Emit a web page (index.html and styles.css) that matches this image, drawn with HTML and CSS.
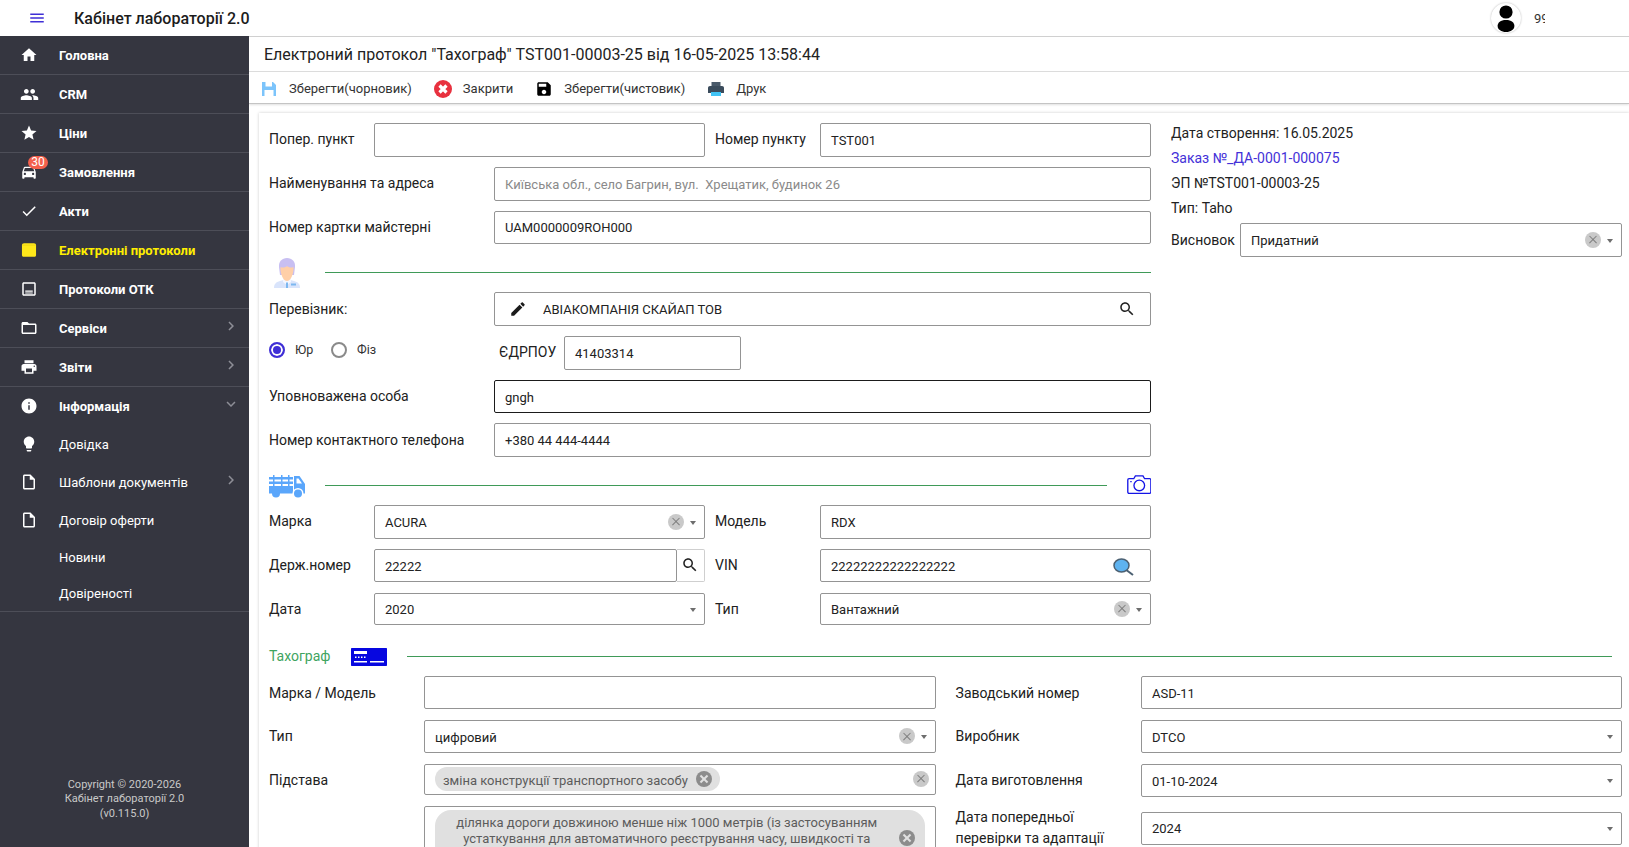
FILE: index.html
```html
<!DOCTYPE html>
<html lang="uk">
<head>
<meta charset="utf-8">
<title>Кабінет лабораторії 2.0</title>
<link rel="stylesheet" href="styles.css">
</head>
<body>
<header class="topbar">
  <svg class="burger" viewBox="0 0 24 24"><path d="M3 18h18v-2H3v2zm0-5h18v-2H3v2zm0-7v2h18V6H3z"/></svg>
  <div class="brand">Кабінет лабораторії 2.0</div>
  <div class="user">
    <div class="avatar"><svg viewBox="0 0 30 30"><circle cx="15" cy="9" r="6.6"/><path d="M15 17c-5.5 0-8.4 2.6-8.4 6 0 3.600 3.800 6 8.400 6s8.400-2.400 8.400-6c0-3.400-2.900-6-8.400-6z"/></svg></div>
    <div class="user-name">99999</div>
  </div>
</header>
<div class="shell">
  <nav class="side">
    <a class="nav main"><svg viewBox="0 0 24 24"><path d="M10 20v-6h4v6h5v-8h3L12 3 2 12h3v8z"/></svg><span>Головна</span></a>
    <a class="nav main"><svg class="wide" viewBox="0 0 24 24"><path d="M16 11c1.660 0 2.990-1.340 2.990-3S17.660 5 16 5c-1.660 0-3 1.340-3 3s1.340 3 3 3zm-8 0c1.660 0 2.990-1.340 2.990-3S9.660 5 8 5C6.340 5 5 6.340 5 8s1.340 3 3 3zm0 2c-2.330 0-7 1.170-7 3.500V19h14v-2.500c0-2.330-4.670-3.500-7-3.500zm8 0c-.29 0-.62.02-.97.05 1.160.84 1.970 1.970 1.970 3.450V19h6v-2.500c0-2.330-4.670-3.500-7-3.500z"/></svg><span>CRM</span></a>
    <a class="nav main"><svg viewBox="0 0 24 24"><path d="M12 17.270L18.180 21l-1.640-7.030L22 9.240l-7.190-.61L12 2 9.190 8.630 2 9.240l5.460 4.730L5.820 21z"/></svg><span>Ціни</span></a>
    <a class="nav main"><svg viewBox="0 0 24 24"><path d="M18.920 6.010C18.720 5.420 18.160 5 17.500 5h-11c-.66 0-1.210.42-1.420 1.010L3 12v8c0 .55.45 1 1 1h1c.55 0 1-.45 1-1v-1h12v1c0 .55.45 1 1 1h1c.55 0 1-.45 1-1v-8l-2.080-5.990zM6.500 16c-.83 0-1.500-.67-1.500-1.500S5.670 13 6.500 13s1.500.67 1.500 1.500S7.330 16 6.500 16zm11 0c-.83 0-1.500-.67-1.500-1.500s.67-1.500 1.500-1.500 1.500.67 1.500 1.500-.67 1.500-1.500 1.500zM5 11l1.500-4.500h11L19 11H5z"/></svg><span>Замовлення</span><b class="badge">30</b></a>
    <a class="nav main"><svg viewBox="0 0 24 24"><path d="M9 16.170L4.830 12l-1.420 1.410L9 19 21 7l-1.410-1.410z"/></svg><span>Акти</span></a>
    <a class="nav main active"><svg viewBox="0 0 24 24"><path d="M5.500 3h13c1.900 0 2.900 1 2.900 2.900V18.500c0 1.600-1 2.500-2.900 2.500h-13c-1.900 0-2.900-.9-2.900-2.500V5.900C2.600 4 3.600 3 5.500 3z"/><path class="cut" d="M3 5.500h18"/></svg><span>Електронні протоколи</span></a>
    <a class="nav main"><svg viewBox="0 0 24 24"><path d="M19 3H5c-1.100 0-2 .9-2 2v14c0 1.100.9 2 2 2h14c1.100 0 2-.9 2-2V5c0-1.100-.9-2-2-2zm0 16H5V5h14v14zM7 14h10v1.500H7zm0 2.500h10V18H7z"/></svg><span>Протоколи ОТК</span></a>
    <a class="nav main"><svg viewBox="0 0 24 24"><path d="M20 6h-8l-2-2H4c-1.100 0-1.990.9-1.990 2L2 18c0 1.100.9 2 2 2h16c1.100 0 2-.9 2-2V8c0-1.100-.9-2-2-2zm0 12H4V8h16v10z"/></svg><span>Сервіси</span><svg class="chev" viewBox="0 0 24 24"><path d="M10 6L8.590 7.410 13.170 12l-4.580 4.590L10 18l6-6z"/></svg></a>
    <a class="nav main"><svg viewBox="0 0 24 24"><path d="M19 8H5c-1.660 0-3 1.340-3 3v6h4v4h12v-4h4v-6c0-1.660-1.340-3-3-3zm-3 11H8v-5h8v5zm3-7c-.55 0-1-.45-1-1s.45-1 1-1 1 .45 1 1-.45 1-1 1zm-1-9H6v4h12V3z"/></svg><span>Звіти</span><svg class="chev" viewBox="0 0 24 24"><path d="M10 6L8.590 7.410 13.170 12l-4.580 4.590L10 18l6-6z"/></svg></a>
    <a class="nav main open"><svg viewBox="0 0 24 24"><path d="M12 2C6.480 2 2 6.480 2 12s4.480 10 10 10 10-4.480 10-10S17.520 2 12 2zm1 15h-2v-6h2v6zm0-8h-2V7h2v2z"/></svg><span>Інформація</span><svg class="chev" viewBox="0 0 24 24"><path d="M16.590 8.590L12 13.170 7.410 8.590 6 10l6 6 6-6z"/></svg></a>
    <a class="nav sub"><svg viewBox="0 0 24 24"><path d="M9 21c0 .55.45 1 1 1h4c.55 0 1-.45 1-1v-1H9v1zm3-19C8.140 2 5 5.140 5 9c0 2.380 1.190 4.470 3 5.740V17c0 .55.45 1 1 1h6c.55 0 1-.45 1-1v-2.260c1.810-1.270 3-3.360 3-5.740 0-3.860-3.140-7-7-7z"/></svg><span>Довідка</span></a>
    <a class="nav sub"><svg viewBox="0 0 24 24"><path d="M14 2H6c-1.100 0-1.990.9-1.990 2L4 20c0 1.100.89 2 1.990 2H18c1.100 0 2-.9 2-2V8l-6-6zM6 20V4h7v5h5v11H6z"/></svg><span>Шаблони документів</span><svg class="chev" viewBox="0 0 24 24"><path d="M10 6L8.590 7.410 13.170 12l-4.580 4.590L10 18l6-6z"/></svg></a>
    <a class="nav sub"><svg viewBox="0 0 24 24"><path d="M14 2H6c-1.100 0-1.990.9-1.990 2L4 20c0 1.100.89 2 1.990 2H18c1.100 0 2-.9 2-2V8l-6-6zM6 20V4h7v5h5v11H6z"/></svg><span>Договір оферти</span></a>
    <a class="nav plain"><span>Новини</span></a>
    <a class="nav plain last"><span>Довіреності</span></a>
    <div class="copy">Copyright © 2020-2026<br>Кабінет лабораторії 2.0<br>(v0.115.0)</div>
  </nav>

  <main class="content">
    <h1 class="doc-title">Електроний протокол "Тахограф" TST001-00003-25 від 16-05-2025 13:58:44</h1>
    <div class="toolbar">
      <div class="tool"><svg viewBox="0 0 18 18"><path class="sv-l" d="M2 2h11l3 3v11H2z"/><path class="sv-w" d="M5.500 2h6.500v4.500H5.500zM4.500 10h9v6h-9z"/></svg><span>Зберегти(чорновик)</span></div>
      <div class="tool"><svg viewBox="0 0 18 18"><circle class="cl-r" cx="9" cy="9" r="9"/><path class="cl-x" d="M5.500 5.500l7 7m0-7l-7 7"/></svg><span>Закрити</span></div>
      <div class="tool"><svg viewBox="0 0 24 24"><path d="M17 3H5c-1.110 0-2 .9-2 2v14c0 1.100.89 2 2 2h14c1.100 0 2-.9 2-2V7l-4-4zm-5 16c-1.660 0-3-1.340-3-3s1.340-3 3-3 3 1.340 3 3-1.340 3-3 3zm3-10H5V5h10v4z"/></svg><span>Зберегти(чистовик)</span></div>
      <div class="tool"><svg viewBox="0 0 18 18"><path class="pr-t" d="M4.500 2h9v4h-9z"/><path class="pr-b" d="M3 6h12c1.200 0 2 .8 2 2v5H1V8c0-1.200.8-2 2-2z"/><path class="pr-p" d="M4 12h10v4H4z"/></svg><span>Друк</span></div>
    </div>

    <div class="card">
      <div class="top-area">
        <section class="left">
          <div class="row r-two">
            <label>Попер. пункт</label><div class="f"></div>
            <label class="second">Номер пункту</label><div class="f">TST001</div>
          </div>
          <div class="row r-long">
            <label>Найменування та адреса</label><div class="f muted">Київська обл., село Багрин, вул.&nbsp; Хрещатик, будинок 26</div>
          </div>
          <div class="row r-long h-s">
            <label>Номер картки майстерні</label><div class="f">UAM0000009ROH000</div>
          </div>

          <div class="sec sec-first">
            <svg class="ic-person" viewBox="0 0 28 30"><path class="p-sh" d="M1 30c0-4 2-6 6-7l7-2 7 2c4 1 6 3 6 7z"/><path class="p-n" d="M10 20h8v4l-4 3-4-3z"/><path class="p-h" d="M14 0c-5 0-8.500 3.500-8 9l1 8h14l1-8c.5-5.500-3-9-8-9z"/><path class="p-f" d="M7.500 9c2.500 1 5 .5 6.500-1 1.500 1.500 4 2 6.500 1 .5 6-2.500 14-6.500 14s-7-8-6.500-14z"/><path class="p-t" d="M13 24.500h2v5.500h-2zM18 25.500h5v2h-5z"/></svg>
            <hr>
          </div>

          <div class="row r-long">
            <label class="nudge">Перевізник:</label>
            <div class="f carrier">
              <svg class="ic-edit" viewBox="0 0 24 24"><path d="M3 17.250V21h3.750L17.810 9.940l-3.750-3.750L3 17.250zM20.710 7.040c.39-.39.39-1.020 0-1.410l-2.340-2.340c-.39-.39-1.020-.39-1.410 0l-1.830 1.830 3.750 3.750 1.830-1.830z"/></svg>
              <span class="grow">АВІАКОМПАНІЯ СКАЙАП ТОВ</span>
              <svg class="ic-search" viewBox="0 0 24 24"><path d="M15.500 14h-.79l-.28-.27C15.410 12.590 16 11.110 16 9.500 16 5.910 13.090 3 9.500 3S3 5.910 3 9.500 5.910 16 9.500 16c1.610 0 3.090-.59 4.230-1.570l.27.28v.79l5 4.990L20.490 19l-4.990-5zm-6 0C7.010 14 5 11.990 5 9.500S7.010 5 9.500 5 14 7.010 14 9.500 11.990 14 9.500 14z"/></svg>
            </div>
          </div>
          <div class="row r-radio">
            <div class="radios">
              <i class="radio on"></i><span class="rtext">Юр</span>
              <i class="radio"></i><span class="rtext">Фіз</span>
            </div>
            <label class="edr">ЄДРПОУ</label><div class="f">41403314</div>
          </div>
          <div class="row r-long h-s">
            <label>Уповноважена особа</label><div class="f focus">gngh</div>
          </div>
          <div class="row r-long">
            <label class="nudge">Номер контактного телефона</label><div class="f">+380 44 444-4444</div>
          </div>

          <div class="sec">
            <svg class="ic-truck" viewBox="0 0 36 24"><path class="tr" d="M0 3h24v2.500H0zM0 7.500h24V10H0zM0 12h24v7.500H0z"/><path class="tr" d="M4 1h1.500v12H4zM12 1h1.500v12H12zM19 1h1.500v12H19z"/><path class="tr" d="M25 2h5.500l5.500 8v9.500H25zM27.500 4.500v5h5.500l-3.500-5z" fill-rule="evenodd"/><circle class="tr" cx="7" cy="19.500" r="4"/><circle class="tr-w" cx="29" cy="19.500" r="5.500"/><circle class="tr" cx="29" cy="19.500" r="4"/></svg>
            <hr>
            <svg class="ic-cam" viewBox="0 0 25 20"><path d="M.7 5.200c0-.8.6-1.300 1.300-1.300h5l1.700-3h8l1.700 3h5.300c.7 0 1.300.5 1.300 1.300V18c0 .7-.6 1.300-1.300 1.300H2c-.7 0-1.300-.6-1.300-1.300z"/><circle cx="12.800" cy="11" r="5.600"/><path d="M3.300 7h1.500"/></svg>
          </div>

          <div class="row r-two">
            <label>Марка</label>
            <div class="f sel"><span class="grow">ACURA</span><i class="clr"></i><i class="caret"></i></div>
            <label class="second">Модель</label><div class="f">RDX</div>
          </div>
          <div class="row r-two h-t">
            <label>Держ.номер</label>
            <div class="group"><div class="f low">22222</div><div class="addon"><svg viewBox="0 0 24 24"><path d="M15.500 14h-.79l-.28-.27C15.410 12.590 16 11.110 16 9.500 16 5.910 13.090 3 9.500 3S3 5.910 3 9.500 5.910 16 9.500 16c1.610 0 3.090-.59 4.230-1.570l.27.28v.79l5 4.990L20.490 19l-4.990-5zm-6 0C7.010 14 5 11.990 5 9.500S7.010 5 9.500 5 14 7.010 14 9.500 11.990 14 9.500 14z"/></svg></div></div>
            <label class="second">VIN</label>
            <div class="f sel low"><span class="grow">22222222222222222</span><svg class="ic-lens" viewBox="0 0 22 18"><path class="l-h" d="M12 11l8 6"/><ellipse class="l-g" cx="8.500" cy="7.500" rx="7.500" ry="6.500"/></svg></div>
          </div>
          <div class="row r-two h-s">
            <label>Дата</label>
            <div class="f sel"><span class="grow">2020</span><i class="caret"></i></div>
            <label class="second">Тип</label>
            <div class="f sel"><span class="grow">Вантажний</span><i class="clr"></i><i class="caret"></i></div>
          </div>
        </section>

        <aside class="right">
          <div class="metas">
            <p class="meta">Дата створення: 16.05.2025</p>
            <p class="meta link">Заказ №_ДА-0001-000075</p>
            <p class="meta">ЭП №TST001-00003-25</p>
            <p class="meta">Тип: Taho</p>
          </div>
          <div class="verdict">
            <label>Висновок</label>
            <div class="f sel"><span class="grow">Придатний</span><i class="clr"></i><i class="caret"></i></div>
          </div>
        </aside>
      </div>

      <div class="sec tacho">
        <span class="tacho-name">Тахограф</span>
        <svg class="ic-card" viewBox="0 0 36 18"><path class="c-b" d="M0 1c0-.6.4-1 1-1h34c.6 0 1 .4 1 1v16c0 .6-.4 1-1 1H1c-.6 0-1-.4-1-1z"/><path class="c-w" d="M3 3h13v3H3zM3 13h13v1.500H3zM19 13h14v1.500H19zM4 8.500h1.500V10H4zM7 8.500h1.500V10H7zM10 8.500h1.500V10H10zM13 8.500h1.500V10H13z"/></svg>
        <hr>
      </div>

      <div class="tacho-grid">
        <section class="t-left">
          <div class="row r-t"><label class="nudge">Марка / Модель</label><div class="f"></div></div>
          <div class="row r-t"><label>Тип</label><div class="f sel low"><span class="grow">цифровий</span><i class="clr"></i><i class="caret"></i></div></div>
          <div class="row r-t h-x">
            <label class="nudge">Підстава</label>
            <div class="f multi"><span class="chip">зміна конструкції транспортного засобу<i class="del"></i></span><i class="clr"></i></div>
          </div>
          <div class="row r-t h-l">
            <label></label>
            <div class="f multi">
              <span class="chip big"><span class="big-text">ділянка дороги довжиною менше ніж 1000 метрів (із застосуванням<br>устаткування для автоматичного реєстрування часу, швидкості та</span><i class="del"></i></span>
            </div>
          </div>
        </section>
        <section class="t-right">
          <div class="row r-u"><label class="nudge">Заводський номер</label><div class="f">ASD-11</div></div>
          <div class="row r-u"><label>Виробник</label><div class="f sel low"><span class="grow">DTCO</span><i class="caret"></i></div></div>
          <div class="row r-u"><label>Дата виготовлення</label><div class="f sel low"><span class="grow">01-10-2024</span><i class="caret"></i></div></div>
          <div class="row r-u wrap"><label>Дата попередньої перевірки та адаптації</label><div class="f sel"><span class="grow">2024</span><i class="caret"></i></div></div>
        </section>
      </div>
    </div>
  </main>
</div>
</body>
</html>
```
FILE: styles.css
```css
* { box-sizing: border-box; }
html, body { margin: 0; height: 847px; overflow: hidden; background: #fff; }
body { font-family: Roboto, "Noto Sans", sans-serif; color: #212121; font-size: 14px; }

.topbar { height: 36px; display: flex; align-items: center; background: #fff; }
.burger { width: 18px; height: 18px; margin-left: 28px; fill: #3f2fd6; flex: none; }
.brand { margin-left: 28px; font-size: 16px; font-weight: 500; color: #1c1c1c; }
.user { margin-left: auto; display: flex; align-items: center; width: 138px; }
.avatar { width: 30px; height: 30px; border-radius: 50%; box-shadow: 0 0 2px rgba(0,0,0,.3); overflow: hidden; background: #fff; }
.avatar svg { width: 30px; height: 30px; display: block; }
.user-name { margin-left: 13px; width: 11px; overflow: hidden; font-size: 13px; color: #333; }

.shell { display: flex; height: 811px; }

.side { width: 249px; flex: none; background: #353640; color: #fff; display: flex; flex-direction: column; }
.nav { display: flex; align-items: center; position: relative; padding-left: 20px; flex: none; }
.nav > svg:first-child { width: 18px; height: 18px; fill: #fff; flex: none; margin-right: 21px; }
.nav > svg.wide { width: 19px; height: 19px; margin-left: -.5px; margin-right: 20.500px; }
.nav span { flex: 1; }
.main { height: 39px; border-bottom: 1px solid #4d4e58; font-size: 13px; font-weight: 700; }
.open { height: 38px; border-bottom: 0; }
.sub { height: 38px; font-size: 13px; font-weight: 400; }
.plain { height: 36px; font-size: 13px; padding-left: 59px; }
.last { height: 37px; border-bottom: 1px solid #4d4e58; padding-top: 1px; }
.active { color: #ffee00; }
.active > svg:first-child { fill: #ffe81a; }
.active .cut { stroke: #e0c80f; stroke-width: .7; fill: none; }
.chev { width: 18px; height: 18px; fill: #8d8e96; flex: none; margin-right: 9px; margin-top: -4px; }
.badge { position: absolute; left: 28px; top: 3px; height: 13px; width: 20px; border-radius: 7px; background: #f4604c; color: #fff; font-size: 12px; font-weight: 400; line-height: 13px; text-align: center; }
.copy { margin-top: auto; padding-bottom: 26px; text-align: center; font-size: 11px; line-height: 14.500px; color: #c9c9c9; }

.content { flex: 1; min-width: 0; border-top: 1px solid #d0d0d0; overflow: hidden; }
.doc-title { margin: 0; height: 35px; border-bottom: 1px solid #dedede; padding-left: 15px; font-size: 16px; font-weight: 400; line-height: 36px; color: #222; }
.toolbar { height: 32px; display: flex; align-items: center; gap: 22px; padding: 2px 0 0 11px; border-bottom: 1px solid #c4c4c4; box-shadow: 0 1px 2px rgba(0,0,0,.12); }
.tool { display: flex; align-items: center; gap: 11px; font-size: 13px; color: #333; }
.tool svg { width: 18px; height: 18px; flex: none; }
.sv-l { fill: #7cc4fb; }
.sv-w { fill: #fff; }
.cl-r { fill: #e8313f; }
.cl-x { stroke: #fff; stroke-width: 3.200; fill: none; }
.pr-t { fill: #4a5a6a; }
.pr-b { fill: #3b4c5c; }
.pr-p { fill: #41c3f5; }

.card { margin: 9px 0 0 10px; padding: 10.330px 7px 0 10px; box-shadow: 0 0 3px rgba(0,0,0,.2); background: #fff; height: 760px; }
.top-area { display: flex; gap: 20px; }
.left { width: 882px; flex: none; }
.right { flex: 1; min-width: 0; }

.row { display: grid; grid-template-rows: 100%; align-items: center; height: 33.330px; margin-bottom: 10.670px; }
.row label { font-size: 14px; color: #212121; line-height: 21px; }
.row label.nudge { margin-top: 2px; }
.h-s { height: 32.330px; }
.h-t { height: 32.330px; margin-top: .330px; margin-bottom: 11.330px; }
.r-two { grid-template-columns: 105px 330.500px 115.500px 331px; }
.r-two label.second { padding-left: 10.500px; }
.r-long { grid-template-columns: 225px 657px; }
.r-radio { grid-template-columns: 225px 70px 176.500px; }
.edr { padding-left: 5px; }

.f { height: 100%; display: flex; align-items: center; padding: 1px 10px 0; border: 1px solid #949494; border-radius: 2px; background: #fff; font-size: 13px; color: #222; white-space: nowrap; min-width: 0; }
.muted { color: #8a8a8a; }
.focus { border-color: #1b1b1b; padding-top: 3px; }
.low { padding-top: 3px; }
.low .clr, .low .caret { position: relative; top: -1px; }
.grow { flex: 1; min-width: 0; }
.sel { padding-right: 8px; }
.clr { width: 16px; height: 16px; border-radius: 50%; background: #c9c9c9; position: relative; flex: none; margin-top: -1px; }
.clr::before, .clr::after { content: ""; position: absolute; left: 3px; right: 3px; top: 7.400px; height: 1.200px; background: #7d7d7d; }
.clr::before { transform: rotate(45deg); }
.clr::after { transform: rotate(-45deg); }
.caret { width: 0; height: 0; border-left: 3.500px solid transparent; border-right: 3.500px solid transparent; border-top: 4px solid #6d6d6d; margin-left: 6px; margin-top: 1px; flex: none; }

.sec { display: flex; align-items: center; height: 30px; margin-top: 14.330px; margin-bottom: 4.330px; }
.sec hr { flex: 1; height: 1px; margin: 0; border: 0; background: #3f9a58; }
.ic-person { width: 28px; height: 30px; margin-left: 4px; margin-right: 24px; flex: none; }
.p-sh { fill: #d9e4fb; }
.p-n { fill: #f4f7ff; }
.p-f { fill: #ffcfa8; }
.p-h { fill: #c8bff2; }
.p-t { fill: #7cb7f0; }
.ic-truck { width: 36px; height: 24px; margin-right: 20px; flex: none; }
.tr { fill: #5aa6fb; }
.tr-w { fill: #fff; }
.ic-cam { width: 24px; height: 19px; margin: -2px 0 0 20px; flex: none; fill: none; stroke: #1414e6; stroke-width: 1.400; }

.carrier { padding-left: 14px; padding-right: 14px; }
.ic-edit { width: 18px; height: 18px; fill: #1b1b1b; margin-right: 16px; flex: none; }
.ic-search { width: 18px; height: 18px; fill: #222; flex: none; }
.radios { display: flex; align-items: center; font-size: 12.500px; margin-top: -6px; }
.radio { width: 16px; height: 16px; border-radius: 50%; border: 2px solid #8a8a8a; flex: none; background: #fff; }
.radio.on { border-color: #3f2fd6; box-shadow: inset 0 0 0 2px #fff; background: #3f2fd6; }
.rtext { margin-left: 10px; width: 36px; color: #333; }
.group { display: flex; height: 100%; }
.group .f { flex: 1; }
.addon { width: 27.500px; border: 1px solid #cfcfcf; border-radius: 0 2px 2px 0; border-left: 0; display: flex; align-items: center; justify-content: center; flex: none; }
.addon svg { width: 18px; height: 18px; fill: #222; }
.ic-lens { width: 22px; height: 18px; flex: none; margin-right: 7px; }
.l-g { fill: #5eb3f0; stroke: #4b6072; stroke-width: 1.500; }
.l-h { stroke: #4b6072; stroke-width: 2; }

.metas { height: 100px; }
.meta { margin: 0; height: 25px; line-height: 25px; font-size: 14px; color: #222; position: relative; top: -2.800px; }
.link { color: #4431d8; }
.verdict { display: grid; grid-template-columns: 69px 1fr; align-items: center; height: 33.330px; }
.verdict label { font-size: 14px; }

.tacho { margin-top: 6px; margin-bottom: 4px; margin-right: 10px; }
.tacho-name { color: #3fa45f; font-size: 14px; width: 82px; margin-top: -1px; flex: none; }
.ic-card { width: 36px; height: 18px; margin-right: 20px; flex: none; }
.c-b { fill: #0707e0; }
.c-w { fill: #fff; }

.tacho-grid { display: flex; gap: 20px; }
.t-left { width: 666.600px; flex: none; }
.t-right { flex: 1; min-width: 0; }
.r-t { grid-template-columns: 155px 511.600px; }
.r-u { grid-template-columns: 185.400px 481px; }
.h-x { height: 31.330px; }
.h-l { height: 60px; }
.multi { padding: 0 6px 0 10px; justify-content: space-between; }
.chip { display: flex; align-items: center; height: 24px; border-radius: 12px; background: #e0e0e0; color: #5c5c5c; font-size: 13px; padding: 2px 8px 0 8px; }
.del { width: 16px; height: 16px; border-radius: 50%; background: #8c8c8c; margin: -2px 0 0 8px; position: relative; flex: none; }
.del::before, .del::after { content: ""; position: absolute; left: 3px; right: 3px; top: 7px; height: 2px; background: #e0e0e0; }
.del::before { transform: rotate(45deg); }
.del::after { transform: rotate(-45deg); }
.h-l .multi { align-items: flex-start; padding-top: 3px; height: 60px; overflow: hidden; padding-right: 10px; }
.chip.big { flex: 1; height: 58px; border-radius: 16px; white-space: normal; padding: 0 10px 0 8px; }
.big-text { flex: 1; text-align: center; line-height: 16px; align-self: flex-start; padding-top: 5px; }
.wrap { margin-top: 14.670px; }
.wrap label { line-height: 21px; padding-right: 20px; }
```
